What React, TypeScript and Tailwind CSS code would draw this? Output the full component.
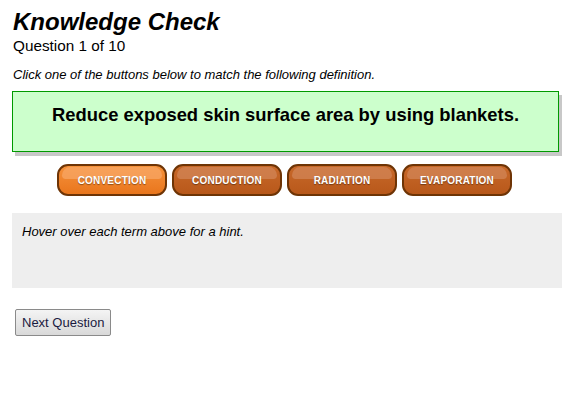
import { useState } from 'react';

const terms = ['Convection', 'Conduction', 'Radiation', 'Evaporation'];

export default function App() {
  const [active] = useState(0);

  return (
    <div className="min-h-[417px] w-[571px] bg-white px-3 pt-[8px] text-black" style={{ fontFamily: '"Liberation Sans", Arial, sans-serif' }}>
      <h1 className="text-[24px] font-bold italic leading-[28px] pl-px">Knowledge Check</h1>
      <div className="text-[15.3px] leading-[18px] pl-px pt-[1px]">Question 1 of 10</div>
      <p className="mt-[12px] text-[13px] italic leading-[15px] pl-px">
        Click one of the buttons below to match the following definition.
      </p>

      <div className="mt-[9px] w-[547px] h-[61px] border border-[#009900] bg-[#ccffcc] pt-[12px] text-center text-[18.4px] font-bold leading-[22px] shadow-[3px_4px_0_#c8c8c8]">
        Reduce exposed skin surface area by using blankets.
      </div>

      <div className="mt-[12px] flex justify-center gap-[5px] pr-[2px]">
        {terms.map((t, i) => (
          <button
            key={t}
            className={`relative h-[32px] w-[110px] overflow-hidden rounded-[11px] border-2 border-[#6e3405] text-[10px] font-bold uppercase tracking-[0.2px] text-white [text-shadow:0_1px_1px_rgba(0,0,0,0.4)] ${
              i === active
                ? 'bg-gradient-to-b from-[#f5913a] to-[#e9761c]'
                : 'bg-gradient-to-b from-[#c8692a] to-[#b8581a]'
            }`}
          >
            <span className={`absolute inset-x-[3px] top-[1px] h-[12px] rounded-t-[9px] rounded-b-[4px] ${i === active ? 'bg-[#f8a868]' : 'bg-[#d3885a]'} opacity-70`} />
            <span className="relative">{t}</span>
          </button>
        ))}
      </div>

      <div className="mt-[17px] w-[550px] h-[75px] bg-[#eeeeee] px-[10px] pt-[11px] text-[13px] italic leading-[15px]">
        Hover over each term above for a hint.
      </div>

      <button className="mt-[21px] ml-[3px] h-[27px] rounded-[2px] border border-[#8a8a8a] bg-gradient-to-b from-[#f4f4f4] to-[#d9d9d9] px-[6px] text-[13px] leading-[15px] text-[#1a1a40]">
        Next Question
      </button>
    </div>
  );
}
